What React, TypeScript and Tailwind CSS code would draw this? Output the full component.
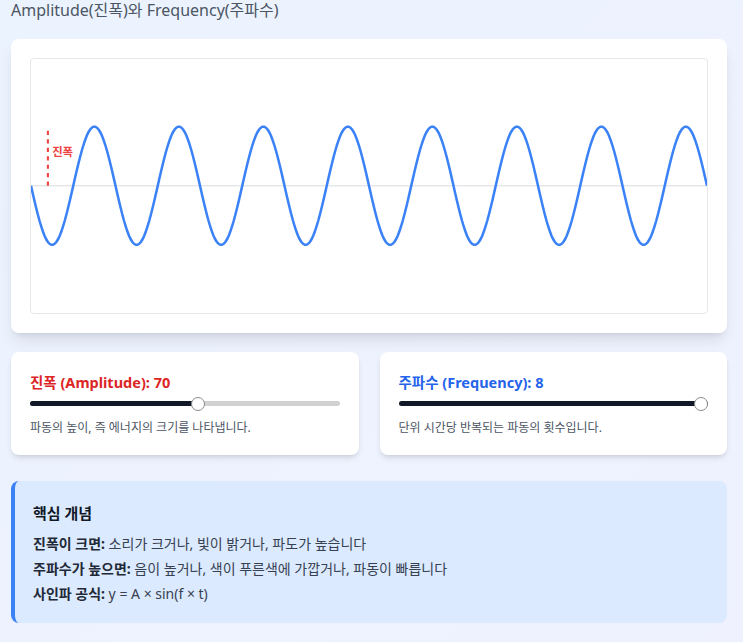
import React from "react";

const FONT = { fontFamily: '"Noto Sans", "Noto Sans CJK KR", sans-serif' };

function WaveChart({ amplitude, frequency }: { amplitude: number; frequency: number }) {
  const width = 800;
  const height = 300;
  const mid = height / 2;
  const pts: string[] = [];
  for (let x = 0; x <= width; x += 2) {
    const y = mid + amplitude * Math.sin((2 * Math.PI * frequency * x) / width);
    pts.push(`${x},${y.toFixed(2)}`);
  }
  return (
    <svg viewBox={`0 0 ${width} ${height}`} className="block w-full">
      <line x1="0" y1={mid} x2={width} y2={mid} stroke="#e5e7eb" strokeWidth="2" />
      <polyline points={pts.join(" ")} fill="none" stroke="#3b82f6" strokeWidth="3" />
      <line
        x1="20"
        y1={mid}
        x2="20"
        y2={mid - amplitude}
        stroke="#ef4444"
        strokeWidth="2.5"
        strokeDasharray="5,5"
      />
      <text x="25" y={mid - amplitude / 2} fill="#ef4444" fontSize="13.5" fontWeight="bold" style={FONT}>
        진폭
      </text>
    </svg>
  );
}

function Slider({ percent }: { percent: number }) {
  return (
    <div className="relative h-[16px] flex items-center">
      <div className="w-full h-[5px] rounded-full bg-[#d1d1d1] overflow-hidden">
        <div className="h-full bg-[#111827]" style={{ width: `${percent}%` }} />
      </div>
      <div
        className="absolute top-[1px] w-[14px] h-[14px] rounded-full bg-white border-[1.5px] border-[#8a8a8a] -translate-x-1/2"
        style={{ left: `calc(7px + (100% - 14px) * ${percent / 100})` }}
      />
    </div>
  );
}

export default function App() {
  const amplitude = 70;
  const frequency = 8;

  return (
    <div className="min-h-[642px] bg-gradient-to-br from-[#ebf3fe] to-[#eff2fe] px-[11px]" style={FONT}>
      <h1 className="text-[16px] leading-[20px] text-[#4b5563]">Amplitude(진폭)와 Frequency(주파수)</h1>

      <div className="mt-[19px] w-[716px] bg-white rounded-lg shadow-lg p-[19px]">
        <div className="border border-gray-200 rounded">
          <WaveChart amplitude={amplitude} frequency={frequency} />
        </div>
      </div>

      <div className="mt-[19px] w-[716px] grid grid-cols-2 gap-[21px]">
        <div className="bg-white rounded-lg shadow-md px-[19px] pt-[20px] pb-[19px]">
          <div className="text-[14.5px] leading-[20px] font-bold text-[#dc2626]">진폭 (Amplitude): {amplitude}</div>
          <div className="mt-[4px]">
            <Slider percent={54.4} />
          </div>
          <p className="mt-[7px] text-[12px] leading-[17px] text-[#4b5563]">
            파동의 높이, 즉 에너지의 크기를 나타냅니다.
          </p>
        </div>
        <div className="bg-white rounded-lg shadow-md px-[19px] pt-[20px] pb-[19px]">
          <div className="text-[14.5px] leading-[20px] font-bold text-[#2563eb]">주파수 (Frequency): {frequency}</div>
          <div className="mt-[4px]">
            <Slider percent={100} />
          </div>
          <p className="mt-[7px] text-[12px] leading-[17px] text-[#4b5563]">
            단위 시간당 반복되는 파동의 횟수입니다.
          </p>
        </div>
      </div>

      <div className="mt-[26px] w-[716px] bg-[#dbeafe] border-l-4 border-[#3b82f6] rounded-lg pl-[18px] pr-5 pt-5 pb-[17px]">
        <h3 className="text-[15px] leading-[24px] font-bold text-[#111827]">핵심 개념</h3>
        <div className="mt-[6px] text-[14px] leading-[25px] text-[#374151]">
          <p>
            <strong className="text-[#1f2937]">진폭이 크면:</strong> 소리가 크거나, 빛이 밝거나, 파도가 높습니다
          </p>
          <p>
            <strong className="text-[#1f2937]">주파수가 높으면:</strong> 음이 높거나, 색이 푸른색에 가깝거나, 파동이 빠릅니다
          </p>
          <p>
            <strong className="text-[#1f2937]">사인파 공식:</strong> y = A × sin(f × t)
          </p>
        </div>
      </div>
    </div>
  );
}
